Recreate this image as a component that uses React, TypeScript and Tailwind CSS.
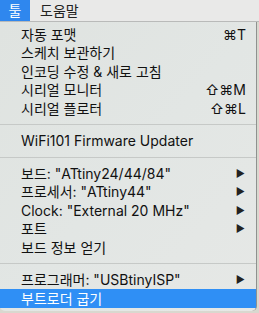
const font = { fontFamily: 'Inter, "Noto Sans CJK KR", sans-serif' };

type Item =
  | { kind: 'sep' }
  | { kind: 'item'; label: string; shortcut?: string; sub?: boolean; active?: boolean };

const items: Item[] = [
  { kind: 'item', label: '자동 포맷', shortcut: '⌘T' },
  { kind: 'item', label: '스케치 보관하기' },
  { kind: 'item', label: '인코딩 수정 & 새로 고침' },
  { kind: 'item', label: '시리얼 모니터', shortcut: '⇧⌘M' },
  { kind: 'item', label: '시리얼 플로터', shortcut: '⇧⌘L' },
  { kind: 'sep' },
  { kind: 'item', label: 'WiFi101 Firmware Updater' },
  { kind: 'sep' },
  { kind: 'item', label: '보드: "ATtiny24/44/84"', sub: true },
  { kind: 'item', label: '프로세서: "ATtiny44"', sub: true },
  { kind: 'item', label: 'Clock: "External 20 MHz"', sub: true },
  { kind: 'item', label: '포트', sub: true },
  { kind: 'item', label: '보드 정보 얻기' },
  { kind: 'sep' },
  { kind: 'item', label: '프로그래머: "USBtinyISP"', sub: true },
  { kind: 'item', label: '부트로더 굽기', active: true },
];

export default function App() {
  return (
    <div className="w-[259px] h-[313px] bg-[#d9d8cf] overflow-hidden text-[14px]" style={font}>
      <div className="h-[22px] flex items-stretch bg-[#e9e9e8] border-b border-[#b9bab9]">
        <div className="w-[30px] flex items-center justify-center bg-[#2f87ee] text-white">툴</div>
        <div className="pl-[10px] flex items-center text-[#222]">도움말</div>
      </div>
      <div className="w-[257px] border-r border-[#8f918f] rounded-b-[5px] bg-gradient-to-br from-[#dfe3e0] via-[#e2e6e4] to-[#e6e8e6] pt-[3px] pb-[3px]">
        {items.map((it, i) =>
          it.kind === 'sep' ? (
            <div key={i} className="h-[14px] flex items-center">
              <div className="w-full h-[1px] bg-[#c6c9c7]" />
            </div>
          ) : (
            <div
              key={i}
              className={
                'h-[18.5px] flex items-center pl-[21px] pr-[10px] ' +
                (it.active ? 'bg-[#2f8ff5] text-white' : 'text-[#111]')
              }
            >
              <span className="flex-1 whitespace-nowrap">{it.label}</span>
              {it.shortcut && <span className="text-[#111]">{it.shortcut}</span>}
              {it.sub && <span className="text-[10px] text-[#222] pr-[1px]">▶</span>}
            </div>
          )
        )}
      </div>
    </div>
  );
}
